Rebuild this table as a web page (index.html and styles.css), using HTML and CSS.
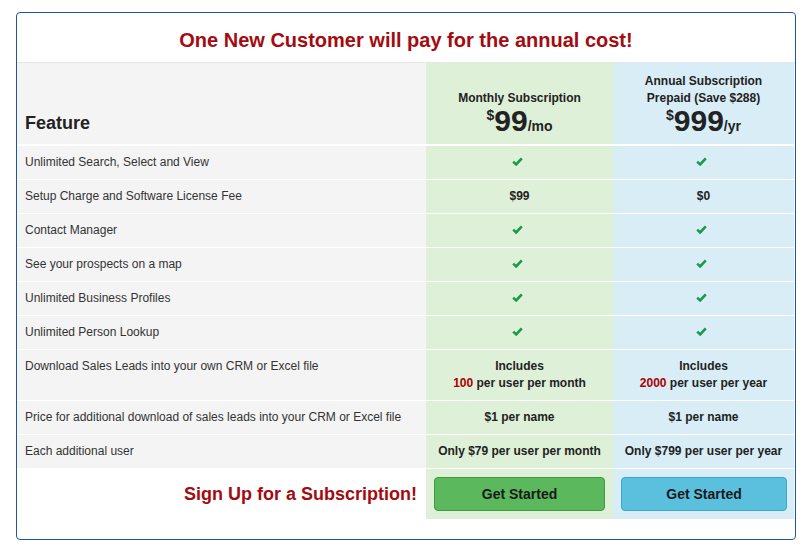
FILE: index.html
```html
<!DOCTYPE html>
<html>
<head>
<meta charset="utf-8">
<link rel="stylesheet" href="styles.css">
</head>
<body>
<div class="page">
  <div class="box">
    <div class="title">One New Customer will pay for the annual cost!</div>
    <table class="pricing">
      <colgroup>
        <col class="c-feat">
        <col class="c-mon">
        <col class="c-ann">
      </colgroup>
      <thead>
        <tr>
          <th class="feat-h">Feature</th>
          <th class="mon">
            <div class="plan">Monthly Subscription</div>
            <div class="price"><sup>$</sup>99<span class="per">/mo</span></div>
          </th>
          <th class="ann">
            <div class="plan">Annual Subscription<br>Prepaid (Save $288)</div>
            <div class="price"><sup>$</sup>999<span class="per">/yr</span></div>
          </th>
        </tr>
      </thead>
      <tbody>
        <tr>
          <td class="feat">Unlimited Search, Select and View</td>
          <td class="mon val"><svg class="chk" width="11" height="9" viewBox="0 0 11 9"><path d="M1.2 4.6 L4.2 7.4 L9.8 1.4" /></svg></td>
          <td class="ann val"><svg class="chk" width="11" height="9" viewBox="0 0 11 9"><path d="M1.2 4.6 L4.2 7.4 L9.8 1.4" /></svg></td>
        </tr>
        <tr>
          <td class="feat">Setup Charge and Software License Fee</td>
          <td class="mon val">$99</td>
          <td class="ann val">$0</td>
        </tr>
        <tr>
          <td class="feat">Contact Manager</td>
          <td class="mon val"><svg class="chk" width="11" height="9" viewBox="0 0 11 9"><path d="M1.2 4.6 L4.2 7.4 L9.8 1.4" /></svg></td>
          <td class="ann val"><svg class="chk" width="11" height="9" viewBox="0 0 11 9"><path d="M1.2 4.6 L4.2 7.4 L9.8 1.4" /></svg></td>
        </tr>
        <tr>
          <td class="feat">See your prospects on a map</td>
          <td class="mon val"><svg class="chk" width="11" height="9" viewBox="0 0 11 9"><path d="M1.2 4.6 L4.2 7.4 L9.8 1.4" /></svg></td>
          <td class="ann val"><svg class="chk" width="11" height="9" viewBox="0 0 11 9"><path d="M1.2 4.6 L4.2 7.4 L9.8 1.4" /></svg></td>
        </tr>
        <tr>
          <td class="feat">Unlimited Business Profiles</td>
          <td class="mon val"><svg class="chk" width="11" height="9" viewBox="0 0 11 9"><path d="M1.2 4.6 L4.2 7.4 L9.8 1.4" /></svg></td>
          <td class="ann val"><svg class="chk" width="11" height="9" viewBox="0 0 11 9"><path d="M1.2 4.6 L4.2 7.4 L9.8 1.4" /></svg></td>
        </tr>
        <tr>
          <td class="feat">Unlimited Person Lookup</td>
          <td class="mon val"><svg class="chk" width="11" height="9" viewBox="0 0 11 9"><path d="M1.2 4.6 L4.2 7.4 L9.8 1.4" /></svg></td>
          <td class="ann val"><svg class="chk" width="11" height="9" viewBox="0 0 11 9"><path d="M1.2 4.6 L4.2 7.4 L9.8 1.4" /></svg></td>
        </tr>
        <tr>
          <td class="feat">Download Sales Leads into your own CRM or Excel file</td>
          <td class="mon val">Includes<br><span class="red">100</span> per user per month</td>
          <td class="ann val">Includes<br><span class="red">2000</span> per user per year</td>
        </tr>
        <tr>
          <td class="feat">Price for additional download of sales leads into your CRM or Excel file</td>
          <td class="mon val">$1 per name</td>
          <td class="ann val">$1 per name</td>
        </tr>
        <tr>
          <td class="feat">Each additional user</td>
          <td class="mon val">Only $79 per user per month</td>
          <td class="ann val">Only $799 per user per year</td>
        </tr>
        <tr class="cta-row">
          <td class="signup">Sign Up for a Subscription!</td>
          <td class="mon btn-cell"><button class="btn btn-green">Get Started</button></td>
          <td class="ann btn-cell"><button class="btn btn-blue">Get Started</button></td>
        </tr>
      </tbody>
    </table>
  </div>
</div>
</body>
</html>
```

FILE: styles.css
```css
html, body {
  margin: 0;
  padding: 0;
  background: #fff;
}
body {
  font-family: "Liberation Sans", Arial, sans-serif;
  color: #333;
}
.page {
  padding: 12px 0 0 16px;
}
.box {
  width: 780px;
  box-sizing: border-box;
  border: 1px solid #1a5a9c;
  border-radius: 4px;
  padding-bottom: 20px;
}
.title {
  text-align: center;
  font-size: 20px;
  font-weight: bold;
  color: #a30b10;
  line-height: 24px;
  padding: 15px 0 10px;
  border-bottom: 1px solid #e6e6e6;
}
.pricing {
  width: 777px;
  border-collapse: collapse;
  table-layout: fixed;
  font-size: 12px;
}
.c-feat { width: 409px; }
.c-mon { width: 187px; }
.c-ann { width: 181px; }

.pricing th {
  vertical-align: bottom;
  padding: 0 8px 2px;
  border-bottom: 2px solid #fff;
  color: #222;
}
.feat-h {
  height: 70px;
  text-align: left;
  font-size: 18px;
  line-height: 20px;
  background: #f4f4f4;
  padding-bottom: 11px !important;
}
.plan {
  font-size: 12px;
  line-height: 17px;
}
.price {
  font-size: 30px;
  line-height: 30px;
  position: relative;
  top: -1px;
}
.price sup {
  font-size: 14px;
  line-height: 14px;
  vertical-align: top;
  position: relative;
  top: 2px;
}
.price .per {
  font-size: 14px;
}
.mon { background: #dff0d8; }
.ann { background: #d9edf7; }

.pricing td {
  padding: 8px 8px 8px;
  line-height: 17px;
  border-top: 1px solid #fff;
  vertical-align: top;
}
.feat {
  background: #f4f4f4;
  color: #333;
}
.val {
  text-align: center;
  font-weight: bold;
  color: #222;
}
.red { color: #a00; }
.chk {
  display: inline-block;
  vertical-align: middle;
  position: relative;
  top: -1px;
  left: -2px;
}
.chk path {
  fill: none;
  stroke: #189a4b;
  stroke-width: 2.6;
  stroke-linecap: butt;
  stroke-linejoin: miter;
}
.signup {
  background: #fff;
  text-align: right;
  font-size: 18px;
  font-weight: bold;
  color: #a30b10;
  vertical-align: middle !important;
  padding-right: 9px !important;
}
.btn-cell {
  padding: 8px !important;
}
.btn-cell.ann {
  padding-right: 7px !important;
}
.btn {
  display: block;
  width: 100%;
  height: 34px;
  box-sizing: border-box;
  border-radius: 4px;
  font-family: "Liberation Sans", Arial, sans-serif;
  font-size: 14px;
  font-weight: bold;
  color: #1a1a1a;
  cursor: pointer;
}
.btn-green {
  background: #5cb85c;
  border: 1px solid #3e9a3e;
}
.btn-blue {
  background: #5bc0de;
  border: 1px solid #3aa8cc;
}
```
